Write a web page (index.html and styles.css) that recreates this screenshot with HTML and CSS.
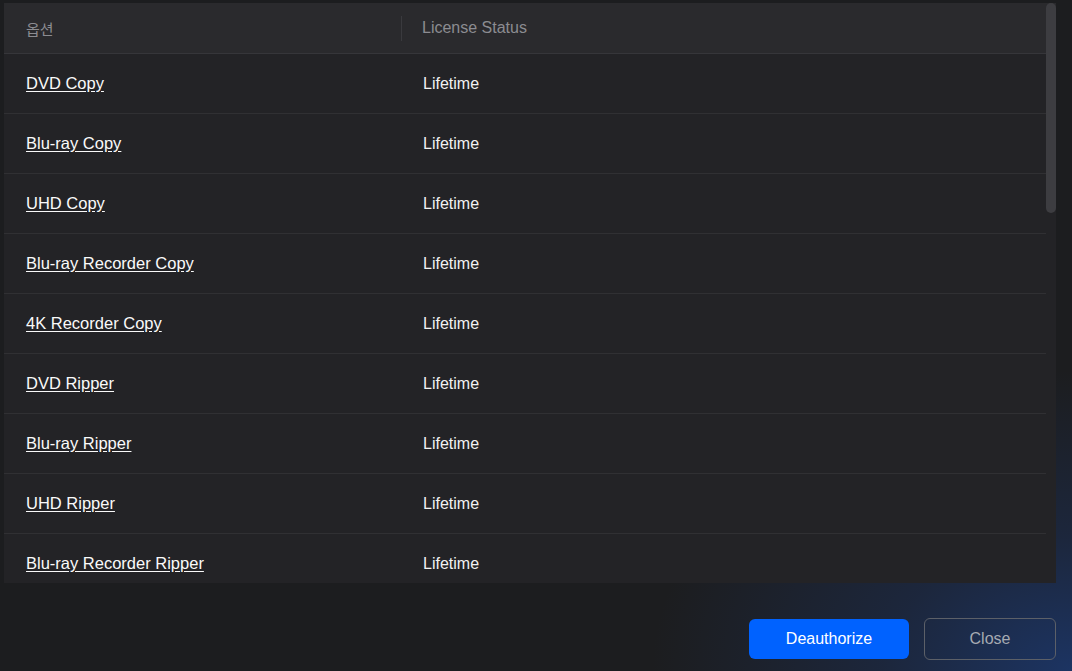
FILE: index.html
```html
<!DOCTYPE html>
<html lang="ko">
<head>
<meta charset="utf-8">
<title>License</title>
<link rel="stylesheet" href="styles.css">
</head>
<body>
<div class="page">
  <div class="panel">
    <div class="list">
      <div class="head">
        <div class="col c1">옵션</div>
        <div class="col c2 divided">License Status</div>
      </div>
      <div class="row"><div class="col c1"><a href="#">DVD Copy</a></div><div class="col c2">Lifetime</div></div>
      <div class="row"><div class="col c1"><a href="#">Blu-ray Copy</a></div><div class="col c2">Lifetime</div></div>
      <div class="row"><div class="col c1"><a href="#">UHD Copy</a></div><div class="col c2">Lifetime</div></div>
      <div class="row"><div class="col c1"><a href="#">Blu-ray Recorder Copy</a></div><div class="col c2">Lifetime</div></div>
      <div class="row"><div class="col c1"><a href="#">4K Recorder Copy</a></div><div class="col c2">Lifetime</div></div>
      <div class="row"><div class="col c1"><a href="#">DVD Ripper</a></div><div class="col c2">Lifetime</div></div>
      <div class="row"><div class="col c1"><a href="#">Blu-ray Ripper</a></div><div class="col c2">Lifetime</div></div>
      <div class="row"><div class="col c1"><a href="#">UHD Ripper</a></div><div class="col c2">Lifetime</div></div>
      <div class="row last"><div class="col c1"><a href="#">Blu-ray Recorder Ripper</a></div><div class="col c2">Lifetime</div></div>
    </div>
    <div class="track"><div class="thumb"></div></div>
  </div>
  <div class="actions">
    <button class="btn primary">Deauthorize</button>
    <button class="btn ghost">Close</button>
  </div>
</div>
</body>
</html>
```
FILE: styles.css
```css
html, body {
  margin: 0;
  padding: 0;
  height: 100%;
}
body {
  background:
    radial-gradient(ellipse 420px 300px at 100% 100%, rgba(28, 56, 110, 0.85) 0%, rgba(28, 50, 95, 0.45) 45%, rgba(28, 29, 31, 0) 100%),
    #1c1d1f;
  font-family: "Liberation Sans", Arial, "Noto Sans CJK KR", sans-serif;
  font-size: 16px;
  overflow: hidden;
}
.page {
  display: flex;
  flex-direction: column;
  padding: 3px 16px 0 4px;
}
.panel {
  display: flex;
  height: 580px;
  background: #232326;
  overflow: hidden;
}
.list {
  flex: 1;
  display: flex;
  flex-direction: column;
}
.head {
  display: flex;
  align-items: center;
  height: 50px;
  flex-shrink: 0;
  background: #2a2a2d;
  border-bottom: 1px solid #36363a;
  color: #8c8c91;
  margin-right: -10px;
}
.row {
  display: flex;
  align-items: center;
  height: 59px;
  border-bottom: 1px solid #303033;
  flex-shrink: 0;
}
.row.last {
  border-bottom: none;
}
.col {
  display: flex;
  align-items: center;
}
.c1 {
  width: 375px;
  padding-left: 22px;
}
.c2 {
  flex: 1;
  padding-left: 22px;
  color: #f2f2f2;
}
.head .c1, .head .c2 {
  color: #8c8c91;
}
.head .c1 {
  font-family: "Noto Sans CJK KR", "Liberation Sans", sans-serif;
  font-size: 15px;
}
.divided {
  border-left: 1px solid #3a3a3e;
  height: 25px;
  padding-left: 20px;
}
.row a {
  color: #fafafa;
  font-size: 16.5px;
  text-decoration: underline;
  text-underline-offset: 2px;
}
.track {
  width: 10px;
  display: flex;
  flex-direction: column;
  position: relative;
  z-index: 1;
}
.thumb {
  height: 210px;
  background: #3d3d41;
  border-radius: 5px;
}
.actions {
  display: flex;
  justify-content: flex-end;
  align-items: center;
  gap: 15px;
  margin-top: 35px;
}
.btn {
  font-family: "Liberation Sans", Arial, sans-serif;
  font-size: 16px;
  border-radius: 6px;
  cursor: pointer;
}
.primary {
  width: 160px;
  height: 40px;
  background: #0062ff;
  border: none;
  color: #ffffff;
}
.ghost {
  width: 132px;
  height: 42px;
  background: transparent;
  border: 1px solid #5c6068;
  color: #a6aab2;
}
```
